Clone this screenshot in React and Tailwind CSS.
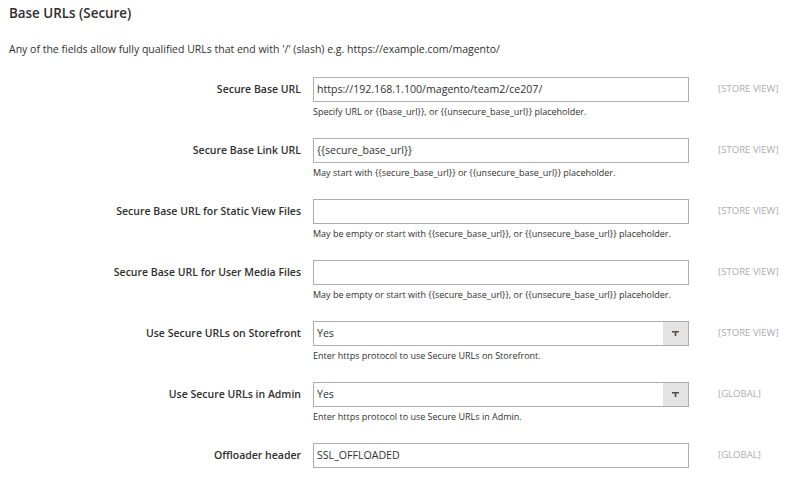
import React from 'react';

const rows = [
  { label: 'Secure Base URL', value: 'https://192.168.1.100/magento/team2/ce207/', note: 'Specify URL or {{base_url}}, or {{unsecure_base_url}} placeholder.', scope: '[STORE VIEW]' },
  { label: 'Secure Base Link URL', value: '{{secure_base_url}}', note: 'May start with {{secure_base_url}} or {{unsecure_base_url}} placeholder.', scope: '[STORE VIEW]' },
  { label: 'Secure Base URL for Static View Files', value: '', note: 'May be empty or start with {{secure_base_url}}, or {{unsecure_base_url}} placeholder.', scope: '[STORE VIEW]' },
  { label: 'Secure Base URL for User Media Files', value: '', note: 'May be empty or start with {{secure_base_url}}, or {{unsecure_base_url}} placeholder.', scope: '[STORE VIEW]' },
  { label: 'Use Secure URLs on Storefront', value: 'Yes', select: true, note: 'Enter https protocol to use Secure URLs on Storefront.', scope: '[STORE VIEW]' },
  { label: 'Use Secure URLs in Admin', value: 'Yes', select: true, note: 'Enter https protocol to use Secure URLs in Admin.', scope: '[GLOBAL]' },
  { label: 'Offloader header', value: 'SSL_OFFLOADED', scope: '[GLOBAL]' },
];

const Field = ({ row }) => (
  <div className="flex items-start h-[61px]">
    <div className="w-[301px] shrink-0 h-[25px] flex items-center justify-end text-[10.5px] font-semibold text-[#303030]">
      {row.label}
    </div>
    <div className="w-[376px] ml-[12px] shrink-0">
      {row.select ? (
        <div className="h-[25px] border border-[#adadad] bg-white flex items-center">
          <span className="flex-1 pl-[3px] text-[10.6px] text-[#303030]">{row.value}</span>
          <span className="w-[25px] h-full bg-[#e3e3e3] flex items-center justify-center">
            <svg width="7" height="5" viewBox="0 0 7 5"><path d="M0 0h7v1.5H4.3V5H2.7V1.5H0z" fill="#514943" /></svg>
          </span>
        </div>
      ) : (
        <div className="h-[25px] border border-[#adadad] bg-white flex items-center pl-[3px] text-[10.6px] text-[#303030]">
          {row.value}
        </div>
      )}
      {row.note && (
        <p className="mt-[4px] text-[9px] leading-[12px] text-[#303030]">{row.note}</p>
      )}
    </div>
    <div className="ml-[29px] h-[25px] flex items-center text-[9.6px] text-[#adadad] uppercase">
      {row.scope}
    </div>
  </div>
);

export default function App() {
  return (
    <div className="w-[795px] h-[483px] bg-white overflow-hidden" style={{ fontFamily: '"Open Sans", sans-serif' }}>
      <div className="pl-[9px] pt-[2px]">
        <h2 className="text-[13.4px] font-semibold text-[#303030] leading-[22px]">Base URLs (Secure)</h2>
        <p className="mt-[17px] text-[10.5px] text-[#303030] leading-[16px]">
          Any of the fields allow fully qualified URLs that end with '/' (slash) e.g. https://example.com/magento/
        </p>
      </div>
      <div className="mt-[20px] flex flex-col">
        {rows.map((r) => (
          <Field key={r.label} row={r} />
        ))}
      </div>
    </div>
  );
}
